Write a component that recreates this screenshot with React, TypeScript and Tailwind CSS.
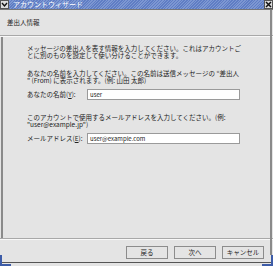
import React from "react";

const font = { fontFamily: '"Noto Sans CJK JP", "Noto Sans", sans-serif' };

export default function App() {
  return (
    <div
      className="w-[273px] h-[266px] bg-[#e4e4e4] relative overflow-hidden text-[6.5px] leading-[7px] text-[#222]"
      style={font}
    >
      {/* title bar */}
      <div className="h-[9px] flex items-stretch bg-[repeating-linear-gradient(135deg,#5f7dc4_0px,#5f7dc4_1px,#7d97d2_1px,#7d97d2_2px)]">
        <div className="w-[9px] h-[9px] bg-[#dcdcdc] border border-[#555] flex items-center justify-center">
          <svg width="7" height="7" viewBox="0 0 7 7">
            <path d="M1 2 L3.5 5 L6 2" stroke="#111" strokeWidth="1.4" fill="none" />
          </svg>
        </div>
        <div className="flex-1 pl-[4px] text-white text-[7px] leading-[9px]">アカウントウィザード</div>
        <div className="w-[9px] h-[9px] bg-[#dcdcdc] border border-[#555] flex items-center justify-center">
          <svg width="7" height="7" viewBox="0 0 7 7">
            <path d="M1 1 L6 6 M6 1 L1 6" stroke="#111" strokeWidth="1.5" />
          </svg>
        </div>
      </div>
      <div className="h-[1px] bg-[#777]" />
      {/* header */}
      <div className="h-[25px] flex items-center pl-[7px] pb-[1px]">差出人情報</div>
      <div className="h-[1px] bg-[#a8a8a8]" />
      <div className="h-[1px] bg-[#f8f8f8]" />
      {/* body */}
      <div className="h-[201px] border-l-[2px] border-[#8a8a8a] ml-[1px] flex flex-col">
        <div className="pl-[24px] pt-[8px] flex flex-col">
          <div>メッセージの差出人を表す情報を入力してください。これはアカウントご</div>
          <div>とに別のものを設定して使い分けることができます。</div>
          <div className="h-[11px]" />
          <div>あなたの名前を入力してください。この名前は送信メッセージの “差出人</div>
          <div>” (From) に表示されます。(例: 山田 太郎)</div>
          <div className="h-[5px]" />
          <div className="flex items-center h-[11px]">
            <div className="w-[60px]">
              あなたの名前(<span className="underline">Y</span>):
            </div>
            <div className="w-[153px] h-[11px] bg-white border border-[#9a9a9a] pl-[2px] leading-[9px] text-[6px]">
              user
            </div>
          </div>
          <div className="h-[14px]" />
          <div>このアカウントで使用するメールアドレスを入力してください。(例:</div>
          <div>"user@example.jp")</div>
          <div className="h-[5px]" />
          <div className="flex items-center h-[11px]">
            <div className="w-[60px]">
              メールアドレス(<span className="underline">E</span>):
            </div>
            <div className="w-[153px] h-[11px] bg-white border border-[#9a9a9a] pl-[2px] leading-[9px] text-[6px]">
              user@example.com
            </div>
          </div>
        </div>
      </div>
      <div className="h-[1px] bg-[#a8a8a8]" />
      <div className="h-[1px] bg-[#f8f8f8]" />
      {/* footer */}
      <div className="h-[22px] flex items-center justify-end pr-[9px] gap-[6px] pt-[3px]">
        <button className="w-[42px] h-[13px] border border-[#8c8c8c] bg-[#e4e4e4] text-[6.5px] leading-[11px]">戻る</button>
        <button className="w-[42px] h-[13px] border border-[#8c8c8c] bg-[#e4e4e4] text-[6.5px] leading-[11px]">次へ</button>
        <button className="w-[42px] h-[13px] border border-[#8c8c8c] bg-[#e4e4e4] text-[6.5px] leading-[11px]">キャンセル</button>
      </div>
      <div className="absolute left-0 right-0 top-[262px] h-[1px] bg-[#555]" />
      <div className="absolute left-0 bottom-0 w-[11px] h-[11px] border-l-[2px] border-b-[2px] border-[#3d5ca8]" />
      <div className="absolute right-0 bottom-0 w-[11px] h-[11px] border-r-[2px] border-b-[2px] border-[#3d5ca8]" />
      <div className="absolute right-[1px] top-[10px] bottom-[11px] w-[2px] bg-[#8a8a8a]" />
    </div>
  );
}
